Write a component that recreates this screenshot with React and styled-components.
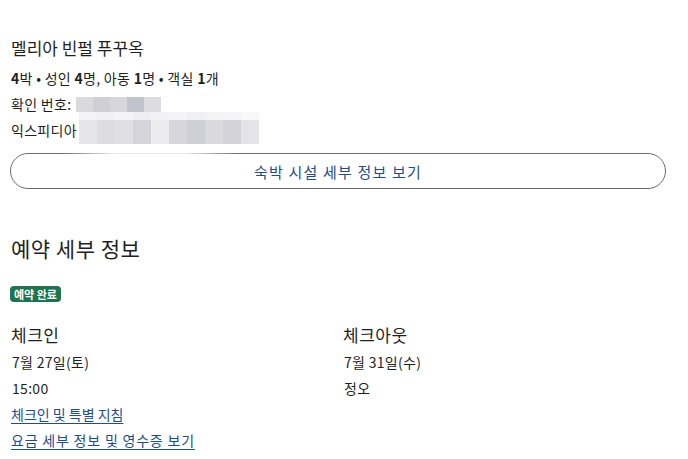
import React from "react";
import styled, { createGlobalStyle } from "styled-components";

const Global = createGlobalStyle`
  html, body { margin: 0; padding: 0; background: #fff; }
  body { font-family: "Noto Sans CJK KR", "Noto Sans", sans-serif; color: #1f1f1f; }
`;

const Page = styled.div`
  position: relative;
  padding: 36px 22px 0 10px;
  width: 688px;
  box-sizing: border-box;
`;

const Section = styled.section`
  display: flex;
  flex-direction: column;
`;

const HotelName = styled.div`
  font-size: 17px;
  line-height: 24px;
  padding-left: 1px;
  margin-bottom: 5px;
`;

const Row = styled.div`
  font-size: 14px;
  line-height: 26px;
  padding-left: 1px;
  letter-spacing: 0.3px;
  white-space: nowrap;
  b { font-weight: 700; }
`;

const OutlineButton = styled.button`
  margin-top: 10px;
  height: 36px;
  width: 100%;
  border: 1px solid #6b6b6b;
  border-radius: 18px;
  background: #fff;
  color: #1f4d8c;
  font-family: inherit;
  font-size: 15px;
  letter-spacing: 1.2px;
  cursor: pointer;
`;

const Heading = styled.h2`
  margin: 44px 0 0 1px;
  font-size: 21px;
  font-weight: 400;
  line-height: 30px;
  letter-spacing: 0.5px;
`;

const Badge = styled.span`
  align-self: flex-start;
  margin-top: 23px;
  background: #1f7350;
  color: #fff;
  font-size: 11px;
  font-weight: 700;
  line-height: 16px;
  padding: 0 4px;
  border-radius: 4px;
`;

const Columns = styled.div`
  display: grid;
  grid-template-columns: 332px 1fr;
  margin-top: 20px;
`;

const Col = styled.div`
  display: flex;
  flex-direction: column;
  padding-left: 1px;
`;

const SubHead = styled.div`
  font-size: 17px;
  line-height: 26px;
  letter-spacing: 0.5px;
  margin-bottom: 1px;
`;

const Link = styled.a`
  font-size: 14px;
  line-height: 26px;
  color: #1f4d8c;
  letter-spacing: ${(p) => p.$spacing || 0}px;
  text-decoration: underline;
  text-underline-offset: 3px;
  padding-left: 1px;
  align-self: flex-start;
  cursor: pointer;
`;

const Mosaic = styled.div`
  position: absolute;
  display: flex;
  left: ${(p) => p.x}px;
  top: ${(p) => p.y}px;
  height: ${(p) => p.h}px;
`;

const Cell = styled.div`
  width: ${(p) => p.w}px;
  height: 100%;
  background: ${(p) => p.c};
`;

const Veil = styled.div`
  position: absolute;
  left: 60px;
  top: 148px;
  width: 180px;
  height: 9px;
  background: linear-gradient(90deg, rgba(255,255,255,0), rgba(255,255,255,0.85) 30%, rgba(255,255,255,0.85) 70%, rgba(255,255,255,0));
`;

const row1 = ["#d9d9de", "#cfcfd5", "#d6d6dc", "#c3c3cb", "#dcdce1"];
const row2top = ["#f3f3f5", "#f1f1f4", "#f4f4f6", "#efeff2", "#f2f2f4", "#f4f4f6", "#f0f0f3", "#f3f3f5", "#f5f5f7", "#f8f8f9"];
const row2 = ["#e6e6ea", "#dcdce1", "#e0e0e4", "#d4d4da", "#ececef", "#d6d6dc", "#cfcfd6", "#d9d9de", "#d3d3d9", "#e4e4e8"];

export default function App() {
  return (
    <>
      <Global />
      <Page>
        <Section>
          <HotelName>멜리아 빈펄 푸꾸옥</HotelName>
          <Row><b>4</b>박 • 성인 <b>4</b>명, 아동 <b>1</b>명 • 객실 <b>1</b>개</Row>
          <Row>확인 번호:</Row>
          <Row>익스피디아</Row>
          <OutlineButton>숙박 시설 세부 정보 보기</OutlineButton>
        </Section>
        <Section>
          <Heading>예약 세부 정보</Heading>
          <Badge>예약 완료</Badge>
          <Columns>
            <Col>
              <SubHead>체크인</SubHead>
              <Row>7월 27일(토)</Row>
              <Row>15:00</Row>
            </Col>
            <Col>
              <SubHead>체크아웃</SubHead>
              <Row>7월 31일(수)</Row>
              <Row>정오</Row>
            </Col>
          </Columns>
          <Link>체크인 및 특별 지침</Link>
          <Link $spacing={0.8}>요금 세부 정보 및 영수증 보기</Link>
        </Section>
        <Mosaic x={76} y={97} h={15}>
          {row1.map((c, i) => <Cell key={i} w={17} c={c} />)}
        </Mosaic>
        <Mosaic x={79} y={112} h={8}>
          {row2top.map((c, i) => <Cell key={i} w={18} c={c} />)}
        </Mosaic>
        <Mosaic x={79} y={120} h={24}>
          {row2.map((c, i) => <Cell key={i} w={18} c={c} />)}
        </Mosaic>
        <Veil />
      </Page>
    </>
  );
}
